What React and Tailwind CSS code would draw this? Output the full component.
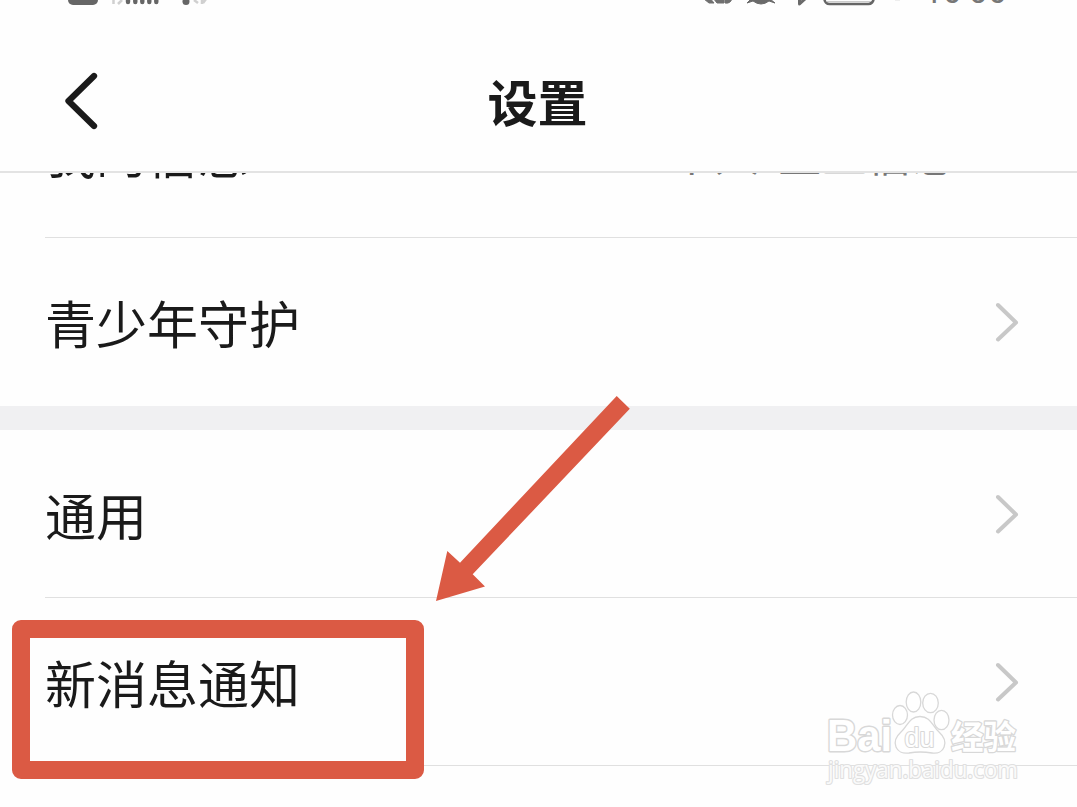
const ROWS = [
  { label: '青少年守护' },
  { label: '通用' },
  { label: '新消息通知' },
]

function Chevron() {
  return (
    <svg className="h-10 w-6 shrink-0" viewBox="0 0 24 40" fill="none">
      <path d="M3 3 L21 20.5 L3 37.5" stroke="#c8c8c8" strokeWidth="4" strokeLinecap="round" strokeLinejoin="round" />
    </svg>
  )
}

function StatusBar() {
  return (
    <div className="flex h-[30px] items-start justify-between overflow-hidden">
      <svg className="h-[30px] w-[240px]" viewBox="0 0 240 30">
        <rect x="68" y="-20" width="30" height="25" rx="5" fill="#666" />
        <g stroke="#666" strokeWidth="4.4" strokeLinecap="round">
          <path d="M128 -6V2M135.300 -6V2M142.300 -6V2M149.300 -6V2M156.300 -6V2" />
        </g>
        <circle cx="186" cy="1.500" r="3.500" fill="#666" />
        <path d="M113.500 -2V4M118 4L122 0M194 0L198 3M202 4V-2M203 3L206 -1" stroke="#d0d0d0" strokeWidth="2.500" />
      </svg>
      <div className="flex items-start">
        <svg className="h-[30px] w-[224px]" viewBox="700 0 224 30" fill="none">
          <path d="M704 -1L709 3H714L709 -3ZM713 -2L717 3H724V-2ZM725 -2V3Q731 4 732 -2Z" fill="#707070" stroke="#707070" />
          <path d="M747 3L751 -1H770L775 3L769 1Q761 7 753 1Z" fill="#6a6a6a" stroke="#6a6a6a" />
          <path d="M799.500 -3V4L806 -2" stroke="#6a6a6a" strokeWidth="3" strokeLinejoin="round" />
          <rect x="824.500" y="-18" width="49" height="22" rx="5" stroke="#666" strokeWidth="2.600" />
          <path d="M827 1.500H871" stroke="#ccc" strokeWidth="1" />
          <path d="M895 0H900" stroke="#ddd" />
        </svg>
        <span className="-mt-[27px] w-[153px] font-[Roboto,sans-serif] text-[33px] leading-[38px] text-[#777]">
          16<span className="relative -top-2">:</span>06
        </span>
      </div>
    </div>
  )
}

function Row({ label, children, className = '' }) {
  return (
    <div className={`ml-[45px] flex h-[168px] items-center justify-between border-b border-[#e0e0e0] pr-[58px] ${className}`}>
      <span className="text-[51px] leading-[60px] text-[#1a1a1a]">{label}</span>
      {children || <Chevron />}
    </div>
  )
}

function Watermark() {
  return (
    <svg
      className="absolute top-[685px] left-[820px] h-[105px] w-[210px]"
      viewBox="820 685 210 105"
      fill="#fff"
      stroke="#d8d8d8"
      strokeWidth="1.300"
      strokeLinejoin="round"
    >
      <text x="827" y="751" className="font-['Liberation_Sans',sans-serif] text-[44px] font-bold" strokeWidth="3" paintOrder="stroke" textLength="65" lengthAdjust="spacingAndGlyphs">Bai</text>
      <ellipse cx="900" cy="715" rx="7.500" ry="9.500" />
      <ellipse cx="913.500" cy="702" rx="7.300" ry="10" />
      <ellipse cx="930.500" cy="703" rx="7.800" ry="9.700" />
      <ellipse cx="941.500" cy="720" rx="7.500" ry="9.700" />
      <path d="M920 716.500C931 716.500 932 726 939 732C950 742 944 755 932 753Q920 751 909 753C896 755 890 742 901 732C908 726 909 716.500 920 716.500Z" />
      <text x="904.500" y="746.500" className="font-['Liberation_Sans',sans-serif] text-[27px]" strokeWidth="2.200" paintOrder="stroke" textLength="30" lengthAdjust="spacingAndGlyphs">du</text>
      <text x="951" y="748.500" className="font-['Noto_Sans_CJK_SC',sans-serif] text-[33px] font-bold" strokeWidth="2.600" paintOrder="stroke" textLength="65" lengthAdjust="spacingAndGlyphs">经验</text>
      <text x="828" y="777.500" className="font-['Open_Sans',sans-serif] text-[23px]" fillOpacity="0.85" stroke="#e0e0e0" strokeWidth="2.200" paintOrder="stroke" textLength="190" lengthAdjust="spacingAndGlyphs">jingyan.baidu.com</text>
    </svg>
  )
}

export default function App() {
  const [guard, general, notify] = ROWS

  return (
    <div className="relative h-[807px] w-[1077px] overflow-hidden bg-[#fefefe] font-['Noto_Sans_CJK_SC',sans-serif]">
      <StatusBar />
      <header className="grid h-[143px] grid-cols-[1fr_auto_1fr] items-center border-b-2 border-[#e3e3e3] pl-[62px]">
        <svg className="h-[60px] w-[38px]" viewBox="0 0 38 60" fill="none">
          <path d="M32 5L6.500 30L32 55" stroke="#1a1a1a" strokeWidth="6.300" strokeLinecap="round" strokeLinejoin="round" />
        </svg>
        <h1 className="-mt-px -translate-x-8 text-[50px] leading-[60px] font-bold text-[#1a1a1a]">设置</h1>
      </header>

      <main>
        {/* first row is scrolled partly under the header */}
        <div className="flex h-[65px] flex-col justify-end overflow-hidden">
          <Row label="我的信息" className="shrink-0 pb-1">
            <span className="mt-[3px] mr-[62px] text-[45px] leading-[60px] text-[#777]">
              个人<span className="relative -top-3">/</span>企业信息
            </span>
          </Row>
        </div>
        <Row label={guard.label} className="border-b-0" />
        <div className="h-6 bg-[#f0f0f2]" />
        <Row label={general.label} />
        <Row label={notify.label} />
      </main>

      <div className="absolute top-[620px] left-[12px] h-[159px] w-[412px] rounded-[9px] border-[18px] border-[#db5a44]" />
      <svg className="absolute top-[390px] left-[430px] h-[215px] w-[205px]" viewBox="430 390 205 215">
        <path d="M616.700 396L629.800 408.700L472.700 574.300L485 586.500L436 601L447.300 551L460 562.700Z" fill="#db5a44" />
      </svg>
      <Watermark />
    </div>
  )
}
